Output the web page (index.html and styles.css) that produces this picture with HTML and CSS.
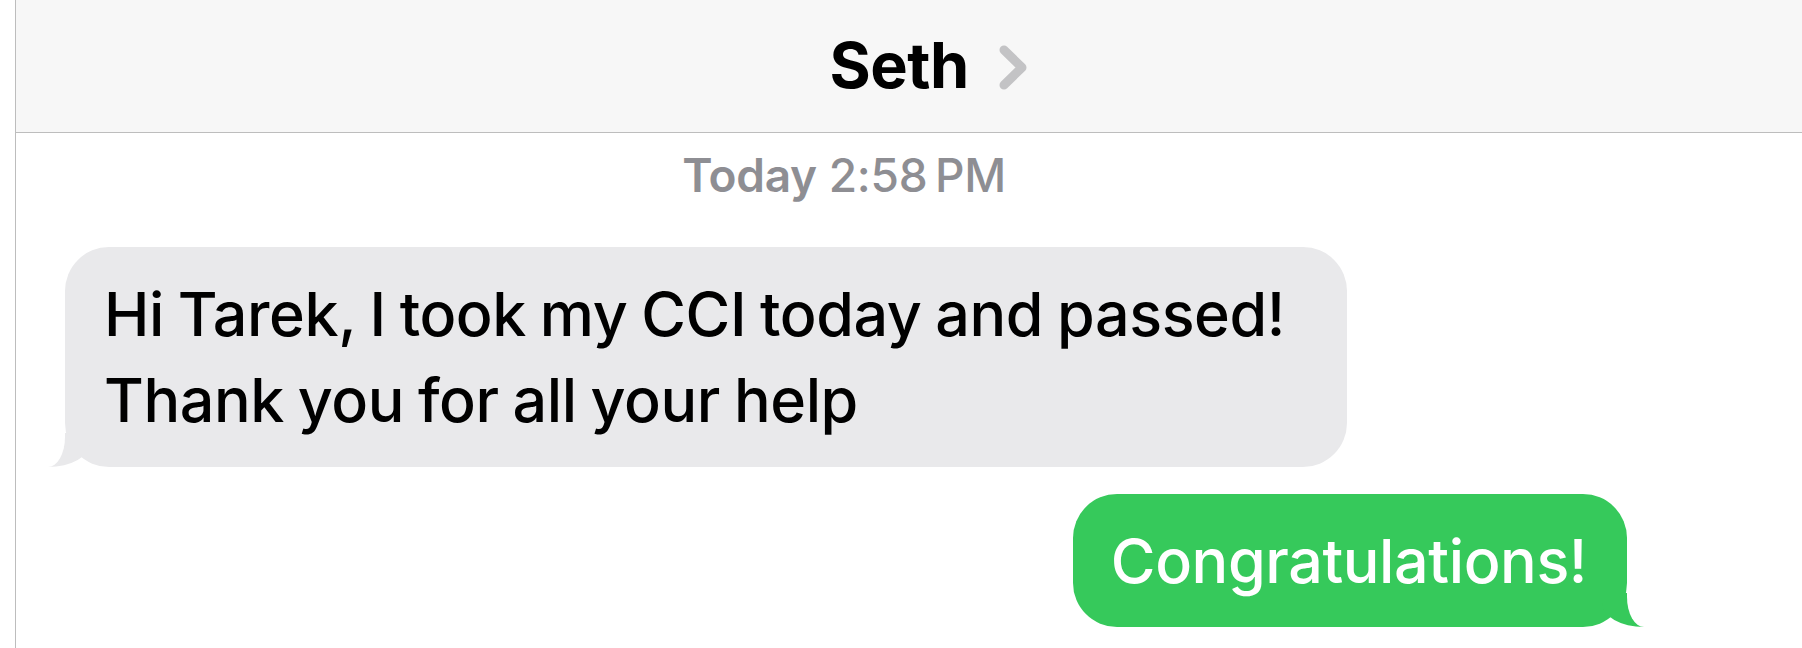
FILE: index.html
```html
<!DOCTYPE html>
<html lang="en">
<head>
  <meta charset="UTF-8" />
  <meta name="viewport" content="width=device-width, initial-scale=1.0"/>
  <title>Seth</title>
  <link rel="stylesheet" href="styles.css">
</head>
<body>
  <div id="screen">
    <div id="header">
      <div class="contact">
        <span class="contact-name">Seth</span>
        <svg class="chevron" width="29" height="45" viewBox="0 0 29 45">
          <polyline points="5,5 23,22.5 5,40" fill="none" stroke="#c3c3c5" stroke-width="9" stroke-linecap="round" stroke-linejoin="round"/>
        </svg>
      </div>
    </div>

    <div id="thread">
      <div class="timestamp"><span class="day">Today</span> 2:58&#8201;PM</div>

      <div class="row row-in">
        <div class="bubble bubble-in">Hi Tarek, I took my CCI today and passed!<br>Thank you for all your help</div>
      </div>

      <div class="row row-out">
        <div class="bubble bubble-out">Congratulations!</div>
      </div>
    </div>
  </div>
</body>
</html>
```

FILE: styles.css
```css
* {
  box-sizing: border-box;
  margin: 0;
  padding: 0;
}

:root {
  --header-bg: #f7f7f7;
  --line-color: #bdbdbd;
  --bubble-in: #e9e9eb;
  --bubble-out: #36c95b;
  --meta-color: #8e8e93;
}

body {
  font-family: Inter, "Noto Sans", sans-serif;
  background: #fff;
  color: #000;
  width: 1802px;
  height: 648px;
  overflow: hidden;
}

#screen {
  margin-left: 15px;
  border-left: 1px solid var(--line-color);
  height: 100%;
}

#header {
  height: 133px;
  background: var(--header-bg);
  border-bottom: 1px solid var(--line-color);
  display: flex;
  justify-content: center;
  align-items: center;
  padding-left: 39px;
  padding-bottom: 1px;
}

.contact {
  display: flex;
  align-items: center;
  gap: 30px;
}

.contact-name {
  font-size: 63px;
  font-weight: 700;
  letter-spacing: -0.5px;
  line-height: 1;
}

.chevron {
  display: block;
  margin-top: 3px;
}

#thread {
  display: flex;
  flex-direction: column;
}

.timestamp {
  margin-top: 14px;
  padding-right: 130px;
  text-align: center;
  font-size: 46px;
  line-height: 56px;
  font-weight: 500;
  letter-spacing: -0.3px;
  color: var(--meta-color);
}

.timestamp .day {
  font-weight: 600;
}

.row {
  display: flex;
}

.row-in {
  margin-top: 44px;
  padding-left: 49px;
}

.row-out {
  margin-top: 27px;
  justify-content: flex-end;
  padding-right: 175px;
}

.bubble {
  position: relative;
  font-size: 61px;
  line-height: 86px;
  font-weight: 500;
  letter-spacing: -0.4px;
  word-spacing: -2px;
  border-radius: 44px;
  padding: 24px 40px 23px 38px;
  white-space: nowrap;
}

.bubble-in {
  background: var(--bubble-in);
  padding: 24px 62px 24px 39px;
}

.bubble-out {
  background: var(--bubble-out);
  color: #fff;
}

/* tails */
.bubble::before,
.bubble::after {
  content: "";
  position: absolute;
  bottom: 0;
  height: 34px;
}

.bubble-in::before {
  left: -17px;
  width: 42px;
  background: var(--bubble-in);
  border-bottom-right-radius: 42px 24px;
}

.bubble-in::after {
  left: -40px;
  width: 40px;
  background: #fff;
  border-bottom-right-radius: 17px 30px;
}

.bubble-out::before {
  right: -17px;
  width: 42px;
  background: var(--bubble-out);
  border-bottom-left-radius: 42px 24px;
}

.bubble-out::after {
  right: -40px;
  width: 40px;
  background: #fff;
  border-bottom-left-radius: 17px 30px;
}
```
